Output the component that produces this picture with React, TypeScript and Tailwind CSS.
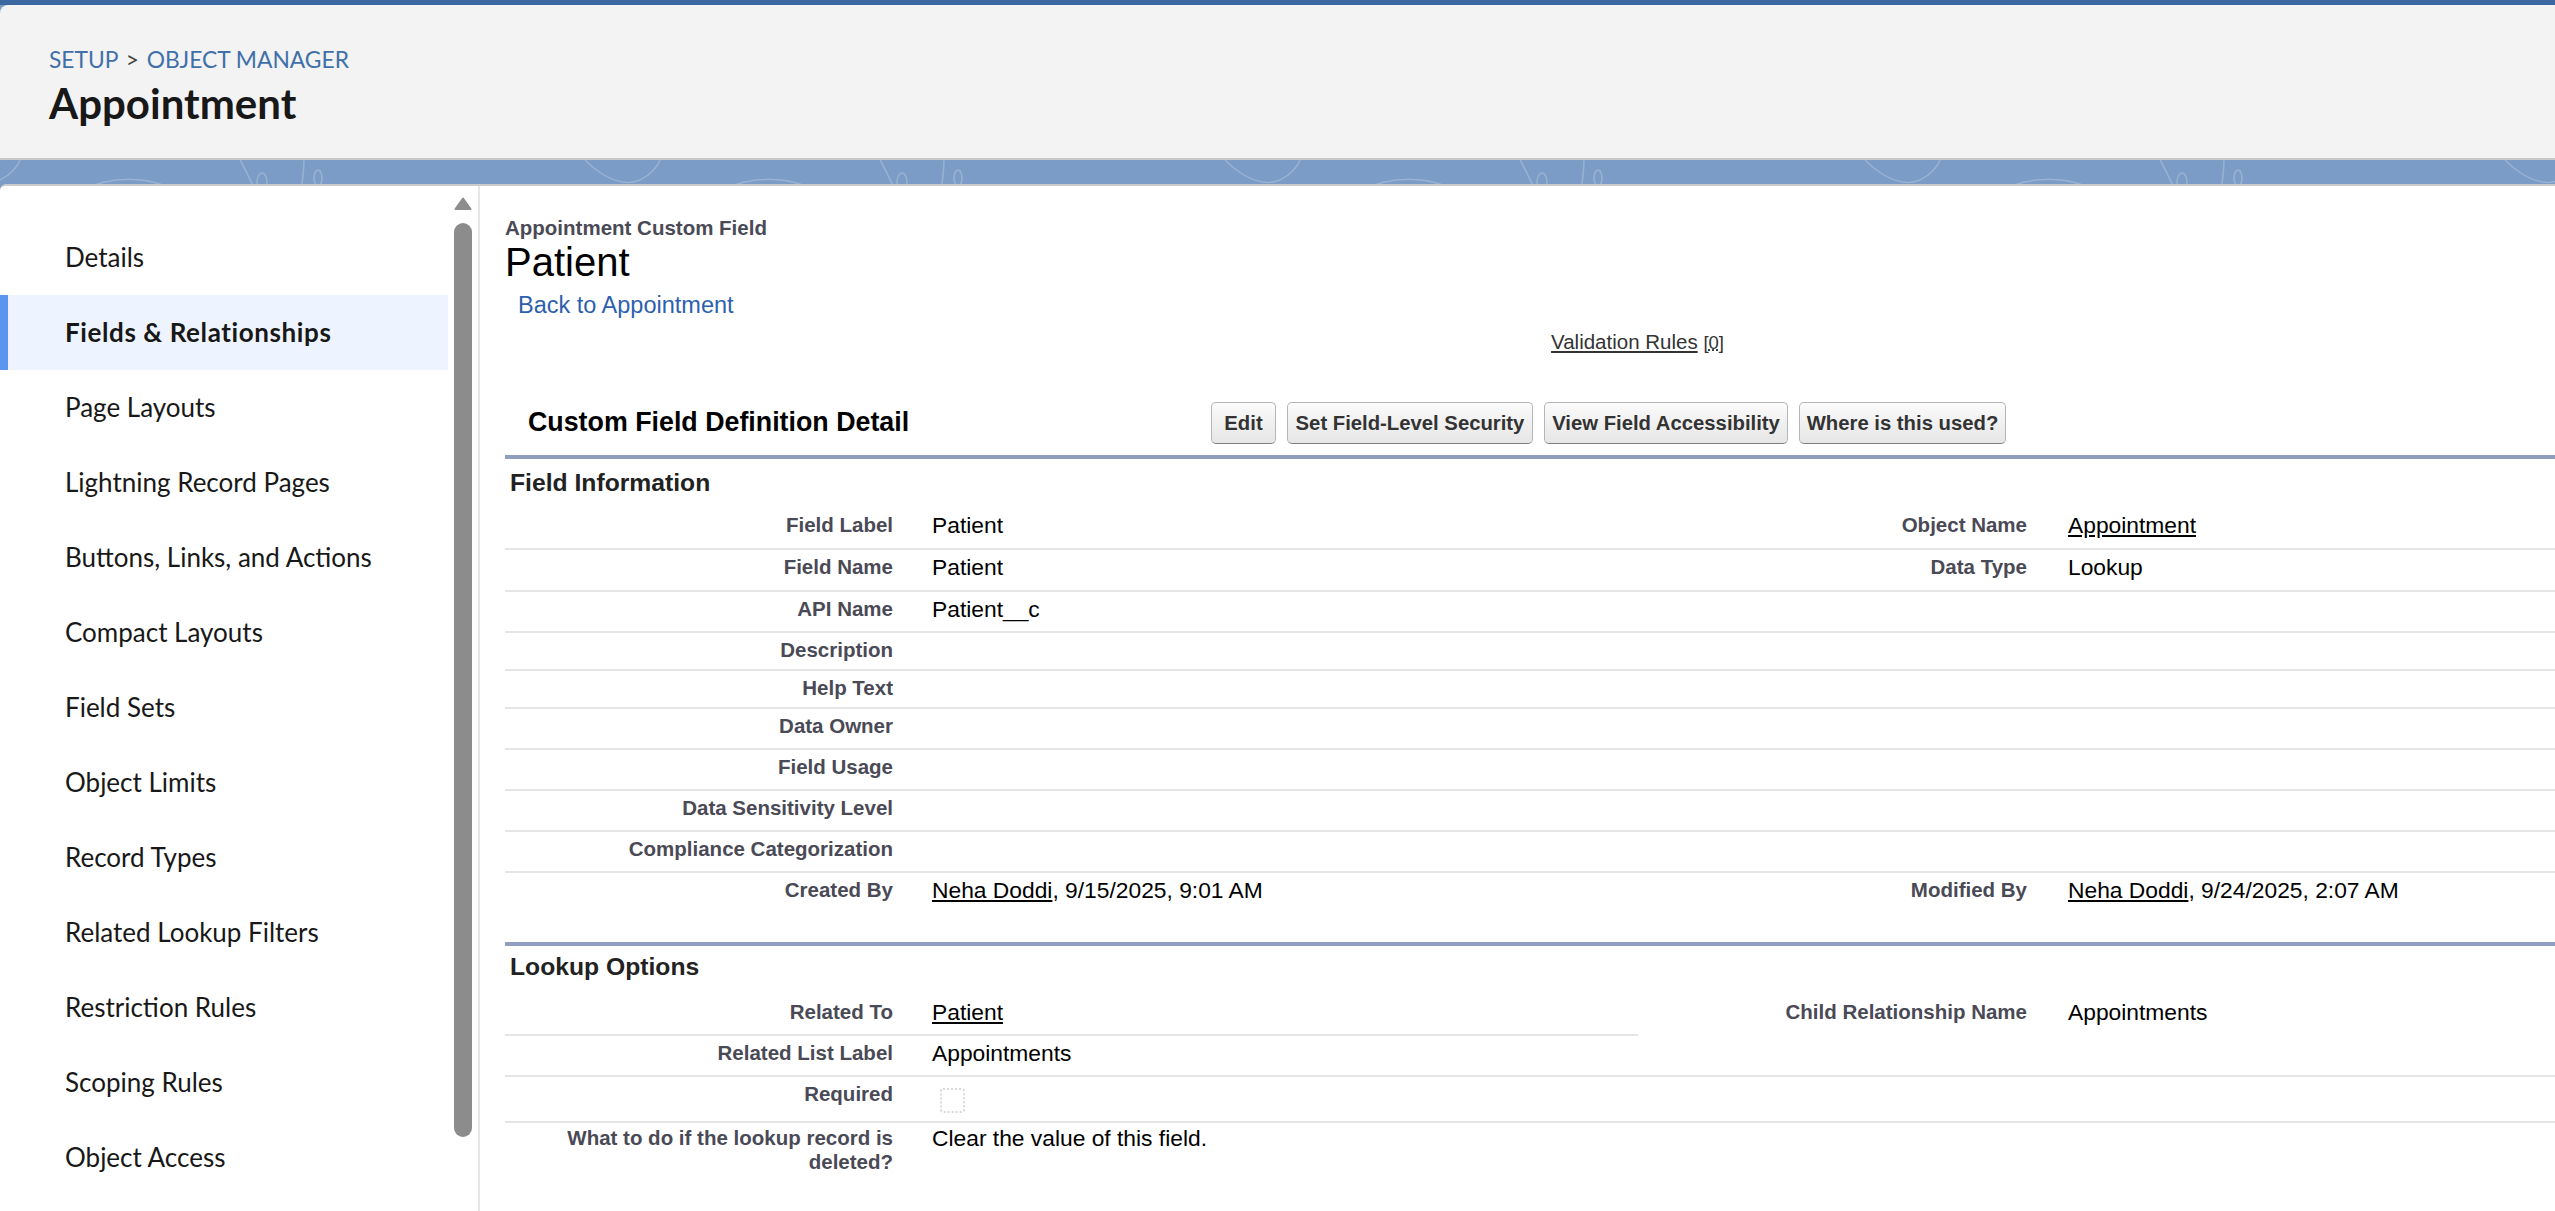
import React from "react";

const navItems = [
  "Details",
  "Fields & Relationships",
  "Page Layouts",
  "Lightning Record Pages",
  "Buttons, Links, and Actions",
  "Compact Layouts",
  "Field Sets",
  "Object Limits",
  "Record Types",
  "Related Lookup Filters",
  "Restriction Rules",
  "Scoping Rules",
  "Object Access",
];

interface InfoRow {
  label: string;
  value?: React.ReactNode;
  rightLabel?: string;
  rightValue?: React.ReactNode;
  h: string;
  border?: boolean;
}

const fieldRows: InfoRow[] = [
  { label: "Field Label", value: "Patient", rightLabel: "Object Name", rightValue: <span className="underline">Appointment</span>, h: "h-[42px]" },
  { label: "Field Name", value: "Patient", rightLabel: "Data Type", rightValue: "Lookup", h: "h-[42px]" },
  { label: "API Name", value: "Patient__c", h: "h-[41px]" },
  { label: "Description", h: "h-[38px]" },
  { label: "Help Text", h: "h-[38px]" },
  { label: "Data Owner", h: "h-[41px]" },
  { label: "Field Usage", h: "h-[41px]" },
  { label: "Data Sensitivity Level", h: "h-[41px]" },
  { label: "Compliance Categorization", h: "h-[41px]" },
  {
    label: "Created By",
    value: (
      <>
        <span className="underline">Neha Doddi</span>, 9/15/2025, 9:01 AM
      </>
    ),
    rightLabel: "Modified By",
    rightValue: (
      <>
        <span className="underline">Neha Doddi</span>, 9/24/2025, 2:07 AM
      </>
    ),
    h: "h-[69px]",
    border: false,
  },
];

const labelCls = "text-right text-[20.5px] leading-[24px] font-bold text-[#4a4a56]";
const valueCls = "text-[22.8px] leading-[26px] text-black";

function Row({ label, value, rightLabel, rightValue, h, border = true }: InfoRow) {
  return (
    <div className={`flex ${h} ${border ? "border-b-2 border-[#e5e5e5]" : ""}`}>
      <div className={`w-[407px] shrink-0 pr-[19px] pt-[5px] ${labelCls}`}>{label}</div>
      <div className={`w-[726px] shrink-0 pl-[20px] pt-[4px] ${valueCls}`}>{value}</div>
      <div className={`w-[408px] shrink-0 pr-[19px] pt-[5px] ${labelCls}`}>{rightLabel}</div>
      <div className={`flex-1 pl-[22px] pt-[4px] ${valueCls}`}>{rightValue}</div>
    </div>
  );
}

function Band({ height }: { height: number }) {
  return (
    <svg width="2555" height={height} className="block">
      <defs>
        <pattern id={`topo${height}`} width="640" height="120" patternUnits="userSpaceOnUse" y={-40}>
          <g fill="none" stroke="#ffffff" strokeOpacity="0.22" strokeWidth="1.5">
            <path d="M30 120 C 60 60, 140 40, 190 80 S 260 130, 300 90" />
            <path d="M70 120 C 90 80, 140 70, 170 95" />
            <path d="M230 20 C 250 60, 270 90, 262 120" />
            <ellipse cx="262" cy="62" rx="5" ry="9" />
            <ellipse cx="318" cy="58" rx="4" ry="8" />
            <path d="M300 0 C 310 40, 300 80, 290 120" />
            <path d="M340 120 C 360 70, 430 50, 470 80 S 540 120, 560 70" />
            <path d="M380 120 C 400 90, 440 85, 460 110" />
            <path d="M560 0 C 580 50, 620 70, 640 60" />
            <path d="M0 60 C 20 50, 30 30, 20 0" />
            <path d="M470 0 C 500 30, 520 30, 540 0" />
          </g>
        </pattern>
      </defs>
      <rect width="2555" height={height} fill={`url(#topo${height})`} />
    </svg>
  );
}

function Btn({ children, w }: { children: React.ReactNode; w: string }) {
  return (
    <button
      className={`${w} h-[42px] shrink-0 rounded-[5px] border border-[#b5b5b5] border-b-[#7f7f7f] bg-gradient-to-b from-[#fbfbfb] to-[#e6e6e6] text-center text-[20.3px] font-bold text-[#333] whitespace-nowrap`}
    >
      {children}
    </button>
  );
}

export default function App() {
  return (
    <div className="flex h-[1211px] w-[2555px] flex-col overflow-hidden bg-[#7b9cc6] font-['Lato',sans-serif]">
      <div className="h-[5px] shrink-0 bg-[#3c68a2]" />

      <header className="h-[155px] shrink-0 rounded-tl-[8px] border-b-2 border-[#c9c9c9] bg-[#f3f3f3] pl-[49px] pt-[40px]">
        <div className="text-[22.8px] leading-[28px] text-[#3f70a9]">
          SETUP <span className="mx-[2px] text-[#444]">&gt;</span> OBJECT MANAGER
        </div>
        <h1 className="mt-[6px] text-[42px] font-bold leading-[48px] text-[#181818]">Appointment</h1>
      </header>

      <div className="h-[24px] shrink-0 overflow-hidden">
        <Band height={24} />
      </div>

      <main className="flex min-h-0 flex-1 rounded-tl-[6px] border-t-2 border-[#cbcbcb] bg-white">
        <aside className="flex w-[480px] shrink-0 border-r-2 border-[#e6e6e6]">
          <nav className="w-[448px] shrink-0 pt-[34px]">
            {navItems.map((item) => {
              const active = item === "Fields & Relationships";
              return (
                <div
                  key={item}
                  className={`flex h-[75px] items-center pl-[65px] text-[26px] text-[#181818] ${
                    active ? "bg-[#eef4ff] font-bold tracking-[0.6px] shadow-[inset_8px_0_0_#5b95ef]" : ""
                  }`}
                >
                  {item}
                </div>
              );
            })}
          </nav>
          <div className="w-[30px] shrink-0 pl-[6px] pt-[11px]">
            <svg width="18" height="13" viewBox="0 0 18 13" className="block">
              <path d="M9 1.5 L16.5 12 L1.5 12 Z" fill="#8d8d8d" stroke="#8d8d8d" strokeWidth="2" strokeLinejoin="round" />
            </svg>
            <div className="mt-[13px] h-[914px] w-[18px] rounded-full bg-[#8c8c8c]" />
          </div>
        </aside>

        <section className="min-w-0 flex-1 overflow-hidden pl-[25px] pt-[30px] font-['Liberation_Sans',Arial,sans-serif]">
          <div className="w-[2265px]">
            <div className="text-[20.5px] font-bold leading-[24px] text-[#4a4a56]">Appointment Custom Field</div>
            <h2 className="text-[40px] leading-[44px] text-black">Patient</h2>
            <div className="ml-[13px] mt-[7px] text-[23.5px] leading-[28px] text-[#2d5fae]">Back to Appointment</div>
            <div className="mt-[11px] text-center text-[20.5px] leading-[24px] text-[#333]">
              <span className="underline">Validation Rules</span>{" "}
              <span className="text-[18.5px]">
                [<span className="underline decoration-dotted">0</span>]
              </span>
            </div>

            <div className="mb-[11px] mt-[47px] flex h-[42px] items-center">
              <div className="mb-[2px] w-[706px] shrink-0 pl-[23px] text-[26.8px] font-bold leading-[32px] text-black">
                Custom Field Definition Detail
              </div>
              <div className="flex gap-[11px]">
                <Btn w="w-[65px]">Edit</Btn>
                <Btn w="w-[246px]">Set Field-Level Security</Btn>
                <Btn w="w-[244px]">View Field Accessibility</Btn>
                <Btn w="w-[207px]">Where is this used?</Btn>
              </div>
            </div>

            <div className="h-[4px] bg-[#8f9dbe]" />
            <h3 className="h-[49px] pl-[5px] pt-[9px] text-[24.7px] font-bold leading-[30px] text-[#222]">Field Information</h3>
            {fieldRows.map((r) => (
              <Row key={r.label} {...r} />
            ))}

            <div className="h-[4px] bg-[#8f9dbe]" />
            <h3 className="h-[46px] pl-[5px] pt-[6px] text-[24.7px] font-bold leading-[30px] text-[#222]">Lookup Options</h3>
            <div className="grid grid-cols-[407px_726px_408px_1fr] grid-rows-[44px_41px_46px_auto]">
              <div className={`border-b-2 border-[#e5e5e5] pr-[19px] pt-[8px] ${labelCls}`}>Related To</div>
              <div className={`border-b-2 border-[#e5e5e5] pl-[20px] pt-[7px] ${valueCls}`}>
                <span className="underline">Patient</span>
              </div>
              <div className={`row-span-2 border-b-2 border-[#e5e5e5] pr-[19px] pt-[8px] ${labelCls}`}>Child Relationship Name</div>
              <div className={`row-span-2 border-b-2 border-[#e5e5e5] pl-[22px] pt-[7px] ${valueCls}`}>Appointments</div>

              <div className={`border-b-2 border-[#e5e5e5] pr-[19px] pt-[5px] ${labelCls}`}>Related List Label</div>
              <div className={`border-b-2 border-[#e5e5e5] pl-[20px] pt-[4px] ${valueCls}`}>Appointments</div>

              <div className={`border-b-2 border-[#e5e5e5] pr-[19px] pt-[5px] ${labelCls}`}>Required</div>
              <div className="border-b-2 border-[#e5e5e5] pl-[28px] pt-[11px]">
                <div className="h-[25px] w-[25px] rounded-[3px] border-2 border-dotted border-[#d9d9d9]" />
              </div>
              <div className="border-b-2 border-[#e5e5e5]" />
              <div className="border-b-2 border-[#e5e5e5]" />

              <div className={`pl-[20px] pr-[19px] pt-[3px] ${labelCls}`}>What to do if the lookup record is deleted?</div>
              <div className={`pl-[20px] pt-[2px] ${valueCls}`}>Clear the value of this field.</div>
              <div />
              <div />
            </div>
          </div>
        </section>
      </main>
    </div>
  );
}
